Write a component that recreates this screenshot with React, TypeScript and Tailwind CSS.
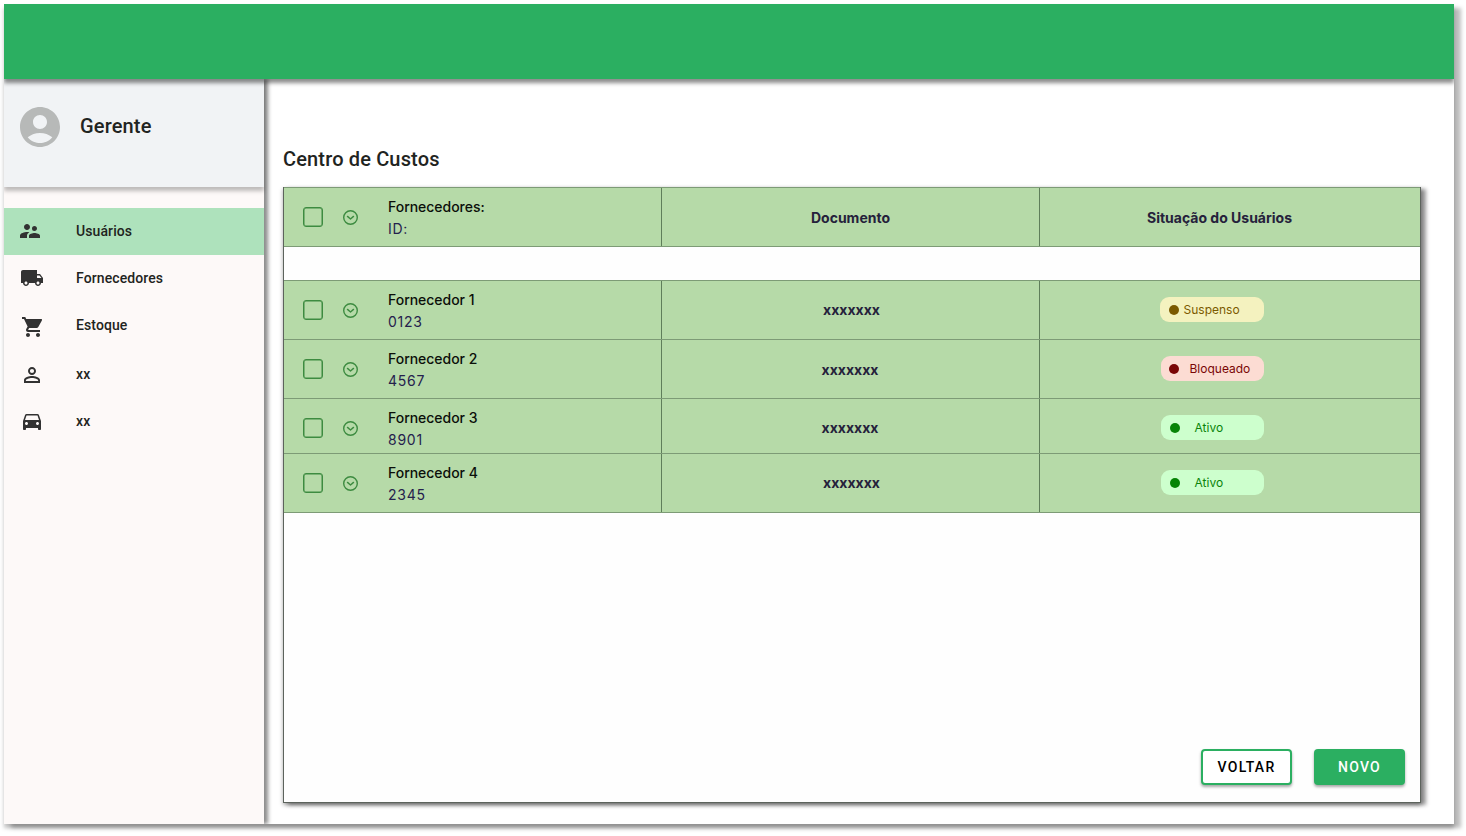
import type { ReactNode } from "react";
import {
  MdAccountCircle,
  MdDirectionsCar,
  MdLocalShipping,
  MdPersonOutline,
  MdShoppingCart,
  MdSupervisorAccount,
} from "react-icons/md";

const roboto = "font-[Roboto,sans-serif]";
const inter = "font-[Inter,sans-serif]";

function ExpandIcon() {
  return (
    <svg viewBox="0 0 16 16" className="mt-[21px] ml-[19px] size-4 shrink-0" fill="none" stroke="#3d8b40" strokeWidth="1.4">
      <circle cx="8.5" cy="8.5" r="6.8" />
      <path d="M5.5 7.4 8.5 10l3-2.6" strokeLinecap="round" strokeLinejoin="round" />
    </svg>
  );
}

type RowProps = {
  name: string;
  id: string;
  doc: string;
  height: string;
  docClass: string;
  children: ReactNode;
};

function Row({ name, id, doc, height, docClass, children }: RowProps) {
  return (
    <div className={`flex border-t border-[#7d9b76] bg-[#b6daa8] ${height}`}>
      <div className="flex w-[377px] shrink-0">
        <div className="mt-[19px] ml-[19px] size-5 shrink-0 rounded-[3px] border-[1.5px] border-[#3d8b40] shadow-[inset_0_0_0_0.5px_#3d8b40]" />
        <ExpandIcon />
        <div className="mt-[8px] ml-[30px]">
          <div className="text-[14px] leading-[22px] font-medium tracking-[-0.03px] whitespace-nowrap text-[#0b0f0a]">{name}</div>
          <div className="text-[14px] leading-[22px] tracking-[0.75px] text-[#25214d]">{id}</div>
        </div>
      </div>
      <div className={`flex w-[378px] shrink-0 justify-center border-l border-[#5f7e5a] text-[14px] leading-5 font-bold text-[#25213b] ${docClass}`}>
        {doc}
      </div>
      <div className="flex grow justify-center border-l border-[#5f7e5a]">{children}</div>
    </div>
  );
}

type BadgeProps = { label: string; box: string; dot: string };

function Badge({ label, box, dot }: BadgeProps) {
  return (
    <div className={`mt-[16px] flex h-[25px] items-center rounded-[9px] text-[12px] ${box}`}>
      <span className={`size-[10px] shrink-0 rounded-full ${dot}`} />
      <span>{label}</span>
    </div>
  );
}

type NavProps = { icon: ReactNode; label: string; className: string };

function NavItem({ icon, label, className }: NavProps) {
  return (
    <div className={`flex shrink-0 items-center text-[#323232] ${className}`}>
      <div className="w-[58px] shrink-0 pb-[2px]">{icon}</div>
      <span className="text-[14px] font-medium tracking-[0.1px] text-[#1f2421]">{label}</span>
    </div>
  );
}

export default function App() {
  return (
    <div className="h-[836px] w-[1466px] overflow-hidden bg-white p-1">
      <div className={`flex h-[820px] w-[1450px] flex-col bg-white shadow-[7px_4px_4px_rgba(0,0,0,0.25),0_4px_4px_rgba(0,0,0,0.25)] ${roboto}`}>
        <header className="relative z-20 h-[75px] shrink-0 bg-[#2baf61] shadow-[0_4px_4px_rgba(0,0,0,0.45)] [clip-path:inset(0_0_-10px_0)]" />
        <div className="flex min-h-0 grow">
          <aside className="relative z-10 flex w-[260px] shrink-0 flex-col bg-[#fdf9f8] shadow-[4px_0_4px_rgba(0,0,0,0.45)] [clip-path:inset(0_-10px_0_0)]">
            <div className="flex h-[108px] shrink-0 items-start bg-[#f1f3f5] pt-6 pl-3 shadow-[0_4px_4px_rgba(0,0,0,0.25)]">
              <MdAccountCircle size={48} className="shrink-0 text-[#b7b9b8]" />
              <span className="mt-[8px] ml-4 text-[20px] leading-[30px] font-medium tracking-[0.15px] text-[#1f2421]">Gerente</span>
            </div>
            <nav className="mt-[21px] flex flex-col">
              <NavItem icon={<MdSupervisorAccount size={24} />} label="Usuários" className="h-[47px] bg-[#aee2bc] pl-[14px]" />
              <NavItem icon={<MdLocalShipping size={24} className="ml-0.5" />} label="Fornecedores" className="h-[47px] pl-[14px]" />
              <NavItem icon={<MdShoppingCart size={24} className="mt-1 ml-[3px]" />} label="Estoque" className="h-[47px] pl-[14px]" />
              <NavItem icon={<MdPersonOutline size={24} className="mt-0.5 ml-0.5" />} label="xx" className="mt-0.5 h-[47px] pl-[14px]" />
              <NavItem icon={<MdDirectionsCar size={24} className="ml-0.5" />} label="xx" className="h-[47px] pl-[14px]" />
            </nav>
          </aside>
          <main className="flex grow flex-col pt-[65px] pl-[19px]">
            <h1 className="h-[43px] text-[20px] leading-[30px] font-medium tracking-[0.15px] text-[#1f2421]">Centro de Custos</h1>
            <section className={`flex h-[616px] w-[1138px] flex-col border border-t-0 border-[#5c635c] bg-[#fefefe] shadow-[5px_2px_4px_rgba(0,0,0,0.4),0_2px_4px_rgba(0,0,0,0.35)] ${inter}`}>
              <Row name="Fornecedores:" id="ID:" doc="Documento" height="h-[59px]" docClass="pt-[20px]">
                <span className="mt-[20px] mr-[21px] text-[14px] leading-5 font-bold text-[#25213b]">Situação do Usuários</span>
              </Row>
              <div className="h-[34px] shrink-0 border-t border-[#7d9b76]" />
              <Row name="Fornecedor 1" id="0123" doc="xxxxxxx" height="h-[59px]" docClass="pt-[19px] pl-[2px]">
                <Badge label="Suspenso" box="w-[104px] mr-[37px] bg-[#f4f2bf] pl-[9px] gap-[5px] text-[#7b5a00]" dot="bg-[#7b5a00]" />
              </Row>
              <Row name="Fornecedor 2" id="4567" doc="xxxxxxx" height="h-[59px]" docClass="pt-[20px] pr-px">
                <Badge label="Bloqueado" box="w-[103px] mr-[36px] bg-[#fcdcd3] pl-[8px] gap-[11px] text-[#7a0606]" dot="bg-[#7a0606]" />
              </Row>
              <Row name="Fornecedor 3" id="8901" doc="xxxxxxx" height="h-[55px]" docClass="pt-[19px] pr-px">
                <Badge label="Ativo" box="w-[103px] mr-[36px] bg-[#cdffcd] pl-[9px] gap-[15px] text-[#0a840a]" dot="bg-[#068406]" />
              </Row>
              <Row name="Fornecedor 4" id="2345" doc="xxxxxxx" height="h-[59px]" docClass="pt-[19px] pl-[2px]">
                <Badge label="Ativo" box="w-[103px] mr-[36px] bg-[#cdffcd] pl-[9px] gap-[15px] text-[#0a840a]" dot="bg-[#068406]" />
              </Row>
              <div className={`flex grow items-end justify-end gap-[22px] border-t border-[#7d9b76] pr-[15px] pb-[17px] text-[14px] font-medium tracking-[1.25px] ${roboto}`}>
                <button className="h-9 w-[91px] rounded-[4px] border-2 border-[#2baf61] bg-white text-black shadow-[0_2px_3px_rgba(0,0,0,0.35)]">VOLTAR</button>
                <button className="h-9 w-[91px] rounded-[4px] bg-[#2baf61] text-white shadow-[0_2px_3px_rgba(0,0,0,0.35)]">NOVO</button>
              </div>
            </section>
          </main>
        </div>
      </div>
    </div>
  );
}
